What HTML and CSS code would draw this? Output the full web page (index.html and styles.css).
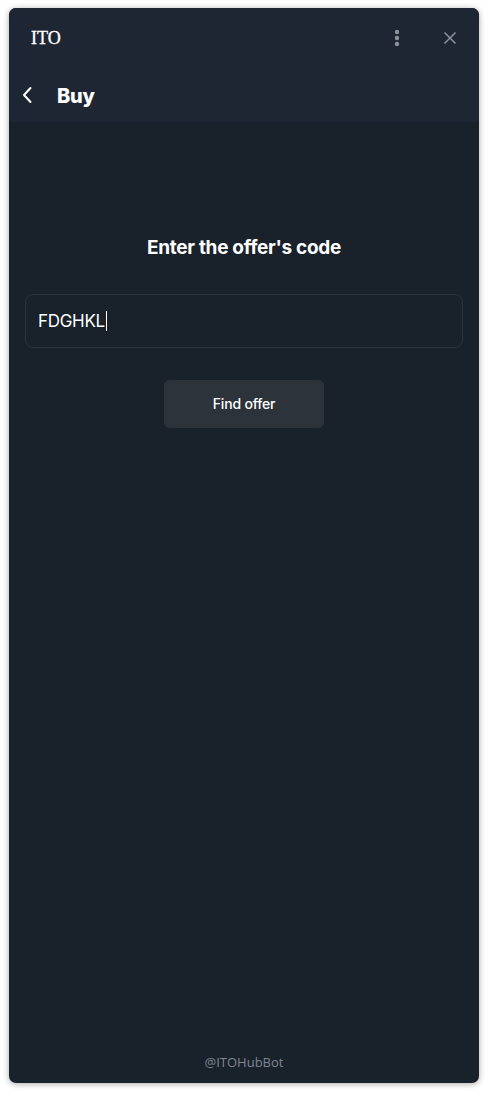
FILE: index.html
```html
<!DOCTYPE html>
<html lang="en">
<head>
<meta charset="utf-8">
<title>ITO</title>
<link rel="stylesheet" href="styles.css">
</head>
<body>
<div class="window">
  <header class="header">
    <div class="titlebar">
      <span class="app-title">ITO</span>
      <div class="title-actions">
        <svg class="icon-more" width="6" height="18" viewBox="0 0 6 18"><circle cx="3" cy="3" r="2.2"/><circle cx="3" cy="9" r="2.2"/><circle cx="3" cy="15" r="2.2"/></svg>
        <svg class="icon-close" width="14" height="14" viewBox="0 0 14 14"><path d="M1.5 1.5 L12.5 12.5 M12.5 1.5 L1.5 12.5"/></svg>
      </div>
    </div>
    <div class="navbar">
      <svg class="icon-back" width="12" height="18" viewBox="0 0 12 18"><path d="M9.5 2 L3 9 L9.5 16"/></svg>
      <h1 class="nav-title">Buy</h1>
    </div>
  </header>
  <main class="content">
    <h2 class="prompt">Enter the offer's code</h2>
    <div class="code-field"><span class="code-value">FDGHKL</span><span class="caret"></span></div>
    <button class="find-btn">Find offer</button>
    <div class="footer">@ITOHubBot</div>
  </main>
</div>
</body>
</html>
```
FILE: styles.css
```css
html, body {
  margin: 0;
  padding: 0;
  background: #ffffff;
}
body {
  padding: 8px 9px 10px 9px;
}
.window {
  width: 470px;
  height: 1075px;
  border-radius: 7px;
  overflow: hidden;
  background: #19212b;
  box-shadow: 0 1px 6px rgba(0,0,0,0.35);
  display: flex;
  flex-direction: column;
}
.header {
  background: #1e2633;
  height: 114px;
  display: flex;
  flex-direction: column;
}
.titlebar {
  height: 60px;
  display: flex;
  align-items: center;
  justify-content: space-between;
  padding: 0 22px 0 22px;
}
.app-title {
  font-family: "Liberation Serif", "Times New Roman", serif;
  font-size: 18px;
  color: #ffffff;
  padding-top: 1px;
  -webkit-text-stroke: 0.3px #ffffff;
}
.title-actions {
  display: flex;
  align-items: center;
  gap: 43px;
}
.icon-more { fill: #8c929b; }
.icon-close { stroke: #8c929b; stroke-width: 1.5; fill: none; }
.navbar {
  height: 54px;
  display: flex;
  align-items: center;
  padding-left: 12px;
  gap: 24px;
}
.icon-back { stroke: #ffffff; stroke-width: 2; fill: none; stroke-linecap: round; stroke-linejoin: round; }
.nav-title {
  margin: 0;
  padding-top: 2px;
  font-family: Inter, "Liberation Sans", sans-serif;
  font-weight: 800;
  font-size: 20px;
  color: #ffffff;
  letter-spacing: -0.3px;
}
.content {
  flex: 1;
  display: flex;
  flex-direction: column;
  align-items: center;
  padding: 114px 16px 0 16px;
}
.prompt {
  margin: 0;
  font-family: Inter, "Liberation Sans", sans-serif;
  font-weight: 700;
  font-size: 19px;
  line-height: 24px;
  color: #ffffff;
  letter-spacing: -0.3px;
}
.code-field {
  align-self: stretch;
  margin-top: 34px;
  height: 52px;
  border: 1px solid #2b333f;
  border-radius: 8px;
  display: flex;
  align-items: center;
  padding: 0 12px;
}
.code-value {
  font-family: Inter, "Liberation Sans", sans-serif;
  font-size: 17px;
  color: #ffffff;
  letter-spacing: -0.3px;
}
.caret {
  width: 1px;
  height: 20px;
  background: #ffffff;
  margin-left: 1px;
}
.find-btn {
  margin-top: 32px;
  width: 160px;
  height: 48px;
  border: none;
  border-radius: 6px;
  background: #2d333b;
  color: #ffffff;
  font-family: Inter, "Liberation Sans", sans-serif;
  font-weight: 500;
  font-size: 14px;
  letter-spacing: -0.2px;
  padding: 0 0 2px 0;
}
.footer {
  margin-top: auto;
  padding-bottom: 12px;
  font-family: "Open Sans", "Noto Sans", sans-serif;
  font-size: 13px;
  color: #7f8690;
}
```
